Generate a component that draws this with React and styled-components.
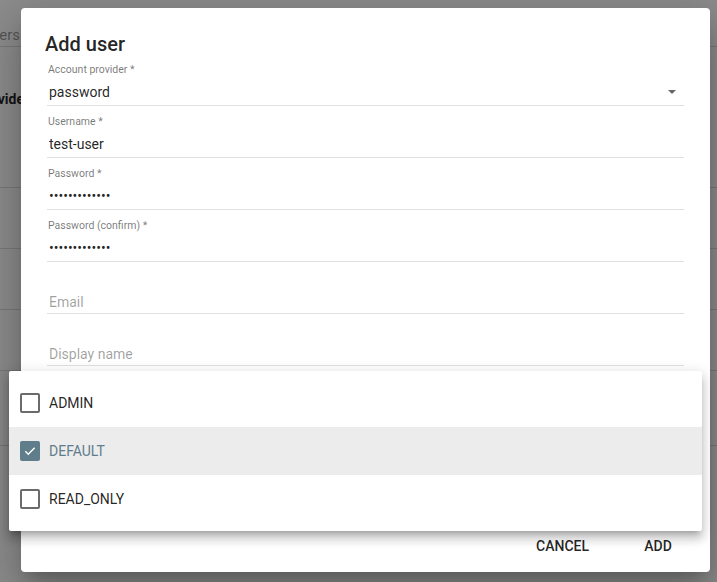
import React from "react";
import styled, { createGlobalStyle } from "styled-components";

const GlobalStyle = createGlobalStyle`
  html, body { margin: 0; padding: 0; }
  body {
    font-family: Roboto, "Liberation Sans", Arial, sans-serif;
    background: #ffffff;
    overflow: hidden;
  }
  * { box-sizing: border-box; }
`;

const Screen = styled.div`
  position: relative;
  width: 717px;
  height: 582px;
  overflow: hidden;
  background: #ffffff;
`;

/* ---------- page behind the modal ---------- */
const BackgroundPage = styled.div`
  display: flex;
  flex-direction: column;
  margin-left: -24px;
  width: 760px;
  color: rgba(0, 0, 0, 0.87);
  font-size: 14px;
`;

const SearchBar = styled.div`
  height: 47px;
  display: flex;
  align-items: flex-end;
  border-bottom: 1px solid #dcdcdc;
  padding-bottom: 1px;
`;

const SearchField = styled.div`
  width: 44px;
  display: flex;
  justify-content: flex-end;
  overflow: hidden;
  white-space: nowrap;
  font-size: 15px;
  line-height: 20px;
  color: rgba(0, 0, 0, 0.42);
`;

const TableHeader = styled.div`
  height: 80px;
  display: flex;
  align-items: flex-end;
  padding-bottom: 18px;
  font-weight: 700;
  font-size: 14px;
  line-height: 20px;
`;

const TableRow = styled.div`
  height: ${(p) => p.$h || 61}px;
  border-bottom: 1px solid #dcdcdc;
`;

const Backdrop = styled.div`
  position: absolute;
  inset: 0;
  background: rgba(0, 0, 0, 0.45);
`;

/* ---------- dialog ---------- */
const Dialog = styled.div`
  position: absolute;
  left: 21px;
  top: 8px;
  width: 689px;
  height: 564px;
  background: #fff;
  border-radius: 4px;
  display: flex;
  flex-direction: column;
  box-shadow: 0px 11px 15px -7px rgba(0, 0, 0, 0.2),
    0px 24px 38px 3px rgba(0, 0, 0, 0.14),
    0px 9px 46px 8px rgba(0, 0, 0, 0.12);
`;

const Title = styled.h2`
  margin: 0;
  padding: 26px 24px 0 24px;
  font-size: 20px;
  line-height: 20px;
  font-weight: 500;
  color: rgba(0, 0, 0, 0.87);
`;

const Fields = styled.div`
  display: flex;
  flex-direction: column;
  margin: 0 26px;
`;

const Field = styled.label`
  height: 52px;
  display: flex;
  flex-direction: column;
  justify-content: flex-end;
  border-bottom: 1px solid #e0e0e0;
  padding: 0 0 ${(p) => (p.$bare ? 1 : 3)}px 1px;
`;

const Label = styled.span`
  font-size: 10.5px;
  line-height: 14px;
  color: rgba(0, 0, 0, 0.54);
  margin-bottom: 5px;
`;

const ValueRow = styled.div`
  display: flex;
  align-items: center;
  height: 20px;
`;

const Input = styled.input`
  flex: 1;
  min-width: 0;
  border: 0;
  outline: 0;
  padding: 0 0 0 1px;
  margin: 0;
  background: transparent;
  font-family: Roboto, "Liberation Sans", Arial, sans-serif;
  font-size: 14px;
  line-height: 20px;
  height: 20px;
  color: rgba(0, 0, 0, 0.87);
  &::placeholder {
    color: rgba(0, 0, 0, 0.38);
    opacity: 1;
  }
`;

const Arrow = styled.span`
  width: 0;
  height: 0;
  margin-right: 8px;
  border-left: 4px solid transparent;
  border-right: 4px solid transparent;
  border-top: 4px solid rgba(0, 0, 0, 0.6);
`;

const Actions = styled.div`
  margin-top: auto;
  display: flex;
  justify-content: flex-end;
  gap: 21px;
  padding: 0 20px 8px 0;
`;

const Button = styled.button`
  height: 36px;
  min-width: 64px;
  padding: 0 16px;
  border: 0;
  background: transparent;
  font-family: Roboto, "Liberation Sans", Arial, sans-serif;
  font-size: 14px;
  font-weight: 500;
  text-transform: uppercase;
  color: rgba(0, 0, 0, 0.87);
  border-radius: 2px;
  cursor: pointer;
`;

/* ---------- role menu ---------- */
const Menu = styled.ul`
  position: absolute;
  left: 9px;
  top: 371px;
  width: 693px;
  margin: 0;
  padding: 8px 0;
  list-style: none;
  background: #fff;
  border-radius: 2px;
  box-shadow: 0px 5px 5px -3px rgba(0, 0, 0, 0.2),
    0px 8px 10px 1px rgba(0, 0, 0, 0.14),
    0px 3px 14px 2px rgba(0, 0, 0, 0.12);
`;

const MenuItem = styled.li`
  height: 48px;
  display: flex;
  align-items: center;
  gap: 9px;
  padding-left: 11px;
  font-size: 14px;
  color: ${(p) => (p.$selected ? "#5f7d8c" : "rgba(0, 0, 0, 0.87)")};
  background: ${(p) => (p.$selected ? "#ececec" : "transparent")};
`;

const Box = styled.span`
  width: 20px;
  height: 20px;
  border-radius: 2px;
  display: flex;
  align-items: center;
  justify-content: center;
  border: ${(p) => (p.$checked ? "0" : "2px solid #6b6b6b")};
  background: ${(p) => (p.$checked ? "#607d8b" : "transparent")};
`;

const Checkbox = ({ checked }) => (
  <Box $checked={checked}>
    {checked && (
      <svg width="14" height="14" viewBox="0 0 24 24">
        <path
          d="M4 12.5l5 5L20 6.5"
          fill="none"
          stroke="#fff"
          strokeWidth="2.4"
        />
      </svg>
    )}
  </Box>
);

const roles = [
  { name: "ADMIN", checked: false },
  { name: "DEFAULT", checked: true },
  { name: "READ_ONLY", checked: false },
];

export default function App() {
  return (
    <Screen>
      <GlobalStyle />
      <BackgroundPage>
        <SearchBar>
          <SearchField>Users</SearchField>
        </SearchBar>
        <TableHeader>Provider</TableHeader>
        <TableRow />
        <TableRow />
        <TableRow />
        <TableRow />
        <TableRow $h={75} />
      </BackgroundPage>
      <Backdrop />
      <Dialog>
        <Title>Add user</Title>
        <Fields>
          <Field>
            <Label>Account provider *</Label>
            <ValueRow>
              <Input readOnly value="password" />
              <Arrow />
            </ValueRow>
          </Field>
          <Field>
            <Label>Username *</Label>
            <ValueRow>
              <Input readOnly value="test-user" />
            </ValueRow>
          </Field>
          <Field>
            <Label>Password *</Label>
            <ValueRow>
              <Input type="password" readOnly value="test-password" />
            </ValueRow>
          </Field>
          <Field>
            <Label>Password (confirm) *</Label>
            <ValueRow>
              <Input type="password" readOnly value="test-password" />
            </ValueRow>
          </Field>
          <Field $bare>
            <ValueRow>
              <Input readOnly placeholder="Email" />
            </ValueRow>
          </Field>
          <Field $bare>
            <ValueRow>
              <Input readOnly placeholder="Display name" />
            </ValueRow>
          </Field>
        </Fields>
        <Actions>
          <Button>Cancel</Button>
          <Button>Add</Button>
        </Actions>
      </Dialog>
      <Menu>
        {roles.map((r) => (
          <MenuItem key={r.name} $selected={r.checked}>
            <Checkbox checked={r.checked} />
            {r.name}
          </MenuItem>
        ))}
      </Menu>
    </Screen>
  );
}
